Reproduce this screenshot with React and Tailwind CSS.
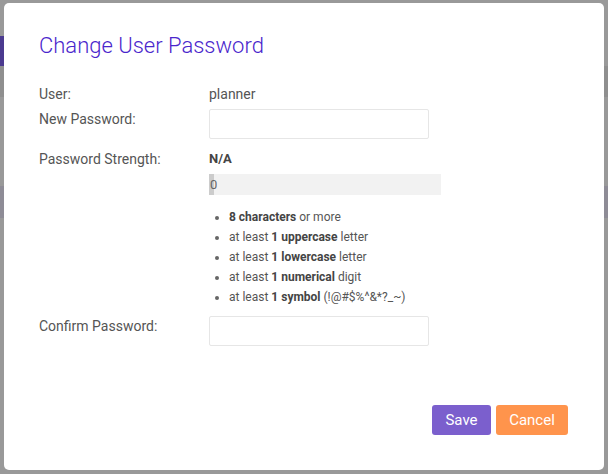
import React from 'react';

const rules = [
  [null, '8 characters', ' or more'],
  ['at least ', '1 uppercase', ' letter'],
  ['at least ', '1 lowercase', ' letter'],
  ['at least ', '1 numerical', ' digit'],
  ['at least ', '1 symbol', ' (!@#$%^&*?_~)'],
];

const App = () => {
  return (
    <div className="relative w-[608px] h-[474px] bg-[#999999] overflow-hidden font-['Roboto',sans-serif]">
      {/* page behind the backdrop */}
      <div className="absolute left-0 top-[36px] w-[6px] h-[30px] bg-[#4b3a8f]" />
      <div className="absolute left-0 top-[66px] w-full h-[31px] bg-[#8f8f8f]" />
      <div className="absolute left-0 top-[186px] w-full h-[32px] bg-[#8e8c96]" />

      <div className="absolute left-[4px] top-[3px] w-[600px] h-[467px] bg-white rounded-[5px] pl-[35px] pr-[36px] pt-[29px] flex flex-col">
        <h2 className="text-[22px] leading-[28px] text-[#4a26cc] font-light">Change User Password</h2>

        <div className="mt-[23px] flex flex-col text-[14px] text-[#555555]">
          <div className="flex items-center h-[22px]">
            <div className="w-[170px]">User:</div>
            <div>planner</div>
          </div>
          <div className="flex mt-[4px]">
            <div className="w-[170px] leading-[20px]">New Password:</div>
            <input type="password" className="w-[220px] h-[30px] border border-[#e6e6e6] rounded-[2px] outline-none" />
          </div>

          <div className="flex mt-[10px]">
            <div className="w-[170px] leading-[20px]">Password Strength:</div>
            <div className="flex flex-col">
              <div className="text-[13px] font-bold text-[#444444] h-[20px] leading-[20px]">N/A</div>
              <div className="relative w-[232px] h-[21px] mt-[5px] bg-[#f2f2f2] flex items-center">
                <div className="absolute left-0 top-0 h-full w-[5px] bg-[#cccccc]" />
                <span className="relative text-[13px] text-[#666666] pl-[1px]">0</span>
              </div>
              <ul className="mt-[12px] pl-[20px] list-disc text-[12px] text-[#555555] leading-[20px] marker:text-[#666666]">
                {rules.map((r, i) => (
                  <li key={i}>
                    {r[0]}
                    <b className="text-[#444444]">{r[1]}</b>
                    {r[2]}
                  </li>
                ))}
              </ul>
            </div>
          </div>

          <div className="flex mt-[9px]">
            <div className="w-[170px] leading-[20px]">Confirm Password:</div>
            <input type="password" className="w-[220px] h-[30px] border border-[#e6e6e6] rounded-[2px] outline-none" />
          </div>
        </div>

        <div className="mt-auto mb-[35px] flex justify-end gap-[5px]">
          <button className="w-[59px] h-[30px] rounded-[3px] bg-[#7b5fcd] text-white text-[15px]">Save</button>
          <button className="w-[72px] h-[30px] rounded-[3px] bg-[#ff944c] text-white text-[15px]">Cancel</button>
        </div>
      </div>
    </div>
  );
};

export default App;
